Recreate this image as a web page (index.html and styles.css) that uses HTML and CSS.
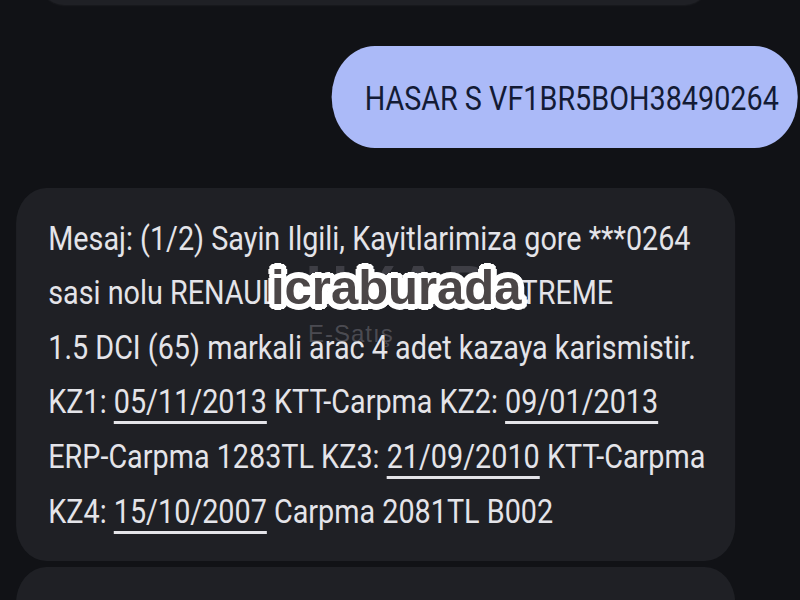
FILE: index.html
```html
<!DOCTYPE html>
<html lang="tr">
<head>
    <meta charset="UTF-8">
    <meta name="viewport" content="width=device-width, initial-scale=1.0">
    <title>Mesajlar</title>
    <link rel="stylesheet" href="styles.css">
</head>
<body>
    <main class="chat">
        <div class="msg in earlier"></div>

        <div class="msg out">HASAR S VF1BR5BOH38490264</div>

        <div class="msg in">
            Mesaj: (1/2) Sayin Ilgili, Kayitlarimiza gore ***0264<br>
            sasi nolu RENAULT CLIO SYMBOL EXTREME<br>
            1.5 DCI (65) markali arac 4 adet kazaya karismistir.<br>
            KZ1: <span class="date">05/11/2013</span> KTT-Carpma KZ2: <span class="date">09/01/2013</span><br>
            ERP-Carpma 1283TL KZ3: <span class="date">21/09/2010</span> KTT-Carpma<br>
            KZ4: <span class="date">15/10/2007</span> Carpma 2081TL B002
        </div>

        <div class="msg in next">
            Mesaj: (2/2) Detayli bilgi icin lutfen kurumumuzla iletisime gecin.
        </div>
    </main>

    <!-- site watermark laid over the conversation -->
    <div class="mark">
        <span class="mark-faint">UYAP</span>
        <span class="mark-sub">E-Satış</span>
        <span class="mark-logo">icraburada</span>
    </div>
</body>
</html>
```

FILE: styles.css
```css
html, body {
    margin: 0;
    padding: 0;
    background-color: #111216;
    overflow: hidden;
}

body {
    width: 800px;
    height: 600px;
    position: relative;
}

.chat {
    width: 946px;
    margin-top: -60px;
    display: flex;
    flex-direction: column;
    transform: scaleX(0.846);
    transform-origin: 0 0;
    font-family: Roboto, "Noto Sans", sans-serif;
    font-size: 34px;
    line-height: 54.6px;
}

.msg {
    box-sizing: border-box;
    border-radius: 36px;
}

.msg.in {
    background-color: #1f2025;
    color: #e4e4e9;
    margin: 0 77px 0 19px;
    padding: 23px 24px 23px 38px;
}

.msg.earlier {
    height: 65px;
    margin: 0 104px 41px 43px;
    padding: 0;
    box-shadow: 0 1px 2px rgba(255, 255, 255, 0.04);
}

.msg.out {
    align-self: flex-end;
    width: 551px;
    margin: 0 3px 40px 0;
    padding: 25px 20px 22px 39px;
    border-radius: 51px;
    background-color: #abbaf8;
    color: #131b35;
    white-space: nowrap;
}

.msg.next {
    margin-top: 6px;
}

.date {
    text-decoration: underline;
    text-decoration-thickness: 3px;
    text-underline-offset: 8px;
}

.mark {
    position: absolute;
    left: 0;
    top: 0;
    width: 800px;
    height: 600px;
    pointer-events: none;
}

.mark-faint {
    position: absolute;
    left: 306px;
    top: 252px;
    font-family: "Liberation Sans", Arial, sans-serif;
    font-weight: bold;
    font-size: 58px;
    letter-spacing: 8px;
    color: rgba(120, 120, 128, 0.35);
}

.mark-sub {
    position: absolute;
    left: 308px;
    top: 320px;
    font-family: "Liberation Sans", Arial, sans-serif;
    font-size: 24px;
    letter-spacing: 1px;
    color: rgba(130, 130, 138, 0.45);
}

.mark-logo {
    position: absolute;
    left: 271px;
    top: 263px;
    font-family: "Liberation Sans", Arial, sans-serif;
    font-weight: bold;
    font-size: 49px;
    line-height: 49px;
    color: #4b4647;
    text-shadow:
        6px 0 0 #fff, -6px 0 0 #fff, 0 6px 0 #fff, 0 -6px 0 #fff,
        4px 4px 0 #fff, -4px 4px 0 #fff, 4px -4px 0 #fff, -4px -4px 0 #fff,
        5px 3px 0 #fff, -5px 3px 0 #fff, 5px -3px 0 #fff, -5px -3px 0 #fff,
        3px 5px 0 #fff, -3px 5px 0 #fff, 3px -5px 0 #fff, -3px -5px 0 #fff,
        0 0 2px #fff;
}
```
